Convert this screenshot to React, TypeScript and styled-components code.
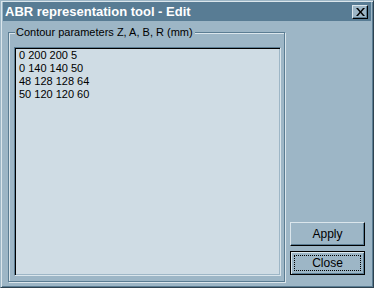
import React from 'react';
import styled, { createGlobalStyle } from 'styled-components';

const GlobalStyle = createGlobalStyle`
  html, body {
    margin: 0;
    padding: 0;
    background: #9db6c6;
  }
  * {
    box-sizing: border-box;
  }
`;

const rows = ['0 200 200 5', '0 140 140 50', '48 128 128 64', '50 120 120 60'];

const App: React.FC = () => {
  return (
    <>
      <GlobalStyle />
      <Window>
        <TitleBar>
          <Title>ABR representation tool - Edit</Title>
          <CloseBox>
            <svg width="9" height="8" viewBox="0 0 9 8">
              <path d="M0 0h2l2.5 3L7 0h2L5.5 4 9 8H7L4.5 5 2 8H0l3.5-4z" fill="#000" />
            </svg>
          </CloseBox>
        </TitleBar>
        <Body>
          <Group>
            <Legend>Contour parameters Z, A, B, R (mm)</Legend>
            <TextArea>
              {rows.map((r) => (
                <Line key={r}>{r}</Line>
              ))}
            </TextArea>
          </Group>
          <Buttons>
            <Button>Apply</Button>
            <Button $default>
              <Focus>Close</Focus>
            </Button>
          </Buttons>
        </Body>
      </Window>
    </>
  );
};

const Window = styled.div`
  width: 374px;
  height: 288px;
  display: flex;
  flex-direction: column;
  background: #9db6c6;
  border-top: 1px solid #9db6c6;
  border-left: 1px solid #9db6c6;
  border-right: 1px solid #2e4250;
  border-bottom: 1px solid #2e4250;
  box-shadow: inset 1px 1px 0 #dbe6ec, inset -1px -1px 0 #5b7d93;
  padding: 1px 2px 2px 2px;
  font-family: 'Liberation Sans', Arial, sans-serif;
  font-size: 11px;
  color: #000;
`;

const TitleBar = styled.div`
  height: 19px;
  flex: none;
  display: flex;
  align-items: center;
  justify-content: space-between;
  background: #587c94;
  padding: 0 3px 0 2px;
`;

const Title = styled.div`
  color: #fff;
  font-weight: bold;
  font-size: 13px;
`;

const CloseBox = styled.div`
  width: 16px;
  height: 14px;
  display: flex;
  align-items: center;
  justify-content: center;
  background: #9db6c6;
  border-top: 1px solid #dbe6ec;
  border-left: 1px solid #dbe6ec;
  border-right: 1px solid #000;
  border-bottom: 1px solid #000;
  box-shadow: inset -1px -1px 0 #5b7d93;
`;

const Body = styled.div`
  flex: 1;
  min-height: 0;
  display: flex;
  gap: 5px;
  padding: 5px 6px 3px 5px;
`;

const Group = styled.fieldset`
  margin: 0;
  width: 278px;
  min-width: 0;
  border: 1px solid #5b7d93;
  box-shadow: inset 1px 1px 0 #dbe6ec, 1px 1px 0 #dbe6ec;
  padding: 8px 3px 5px 5px;
  display: flex;
`;

const Legend = styled.legend`
  padding: 0 2px 0 1px;
  margin-left: 1px;
  line-height: 13px;
  background: #9db6c6;
`;

const TextArea = styled.div`
  flex: 1;
  background: #cfdce4;
  border-top: 1px solid #5b7d93;
  border-left: 1px solid #5b7d93;
  border-right: 1px solid #dbe6ec;
  border-bottom: 1px solid #dbe6ec;
  box-shadow: inset 1px 1px 0 #000, inset -1px -1px 0 #9db6c6;
  padding: 1px 4px;
`;

const Line = styled.div`
  line-height: 13px;
  height: 13px;
  white-space: pre;
`;

const Buttons = styled.div`
  display: flex;
  flex-direction: column;
  justify-content: flex-end;
  gap: 5px;
  padding-bottom: 7px;
`;

const Button = styled.div<{ $default?: boolean }>`
  width: 75px;
  height: 24px;
  display: flex;
  align-items: center;
  justify-content: center;
  font-size: 12px;
  background: #9db6c6;
  border-top: 1px solid ${(p) => (p.$default ? '#000' : '#dbe6ec')};
  border-left: 1px solid ${(p) => (p.$default ? '#000' : '#dbe6ec')};
  border-right: 1px solid #000;
  border-bottom: 1px solid #000;
  box-shadow: ${(p) =>
    p.$default
      ? 'inset 1px 1px 0 #dbe6ec, inset -1px -1px 0 #5b7d93'
      : 'inset -1px -1px 0 #5b7d93'};
  padding: ${(p) => (p.$default ? '3px' : '0')};
`;

const Focus = styled.div`
  width: 100%;
  height: 100%;
  display: flex;
  align-items: center;
  justify-content: center;
  border: 1px dotted #000;
`;

export default App;
